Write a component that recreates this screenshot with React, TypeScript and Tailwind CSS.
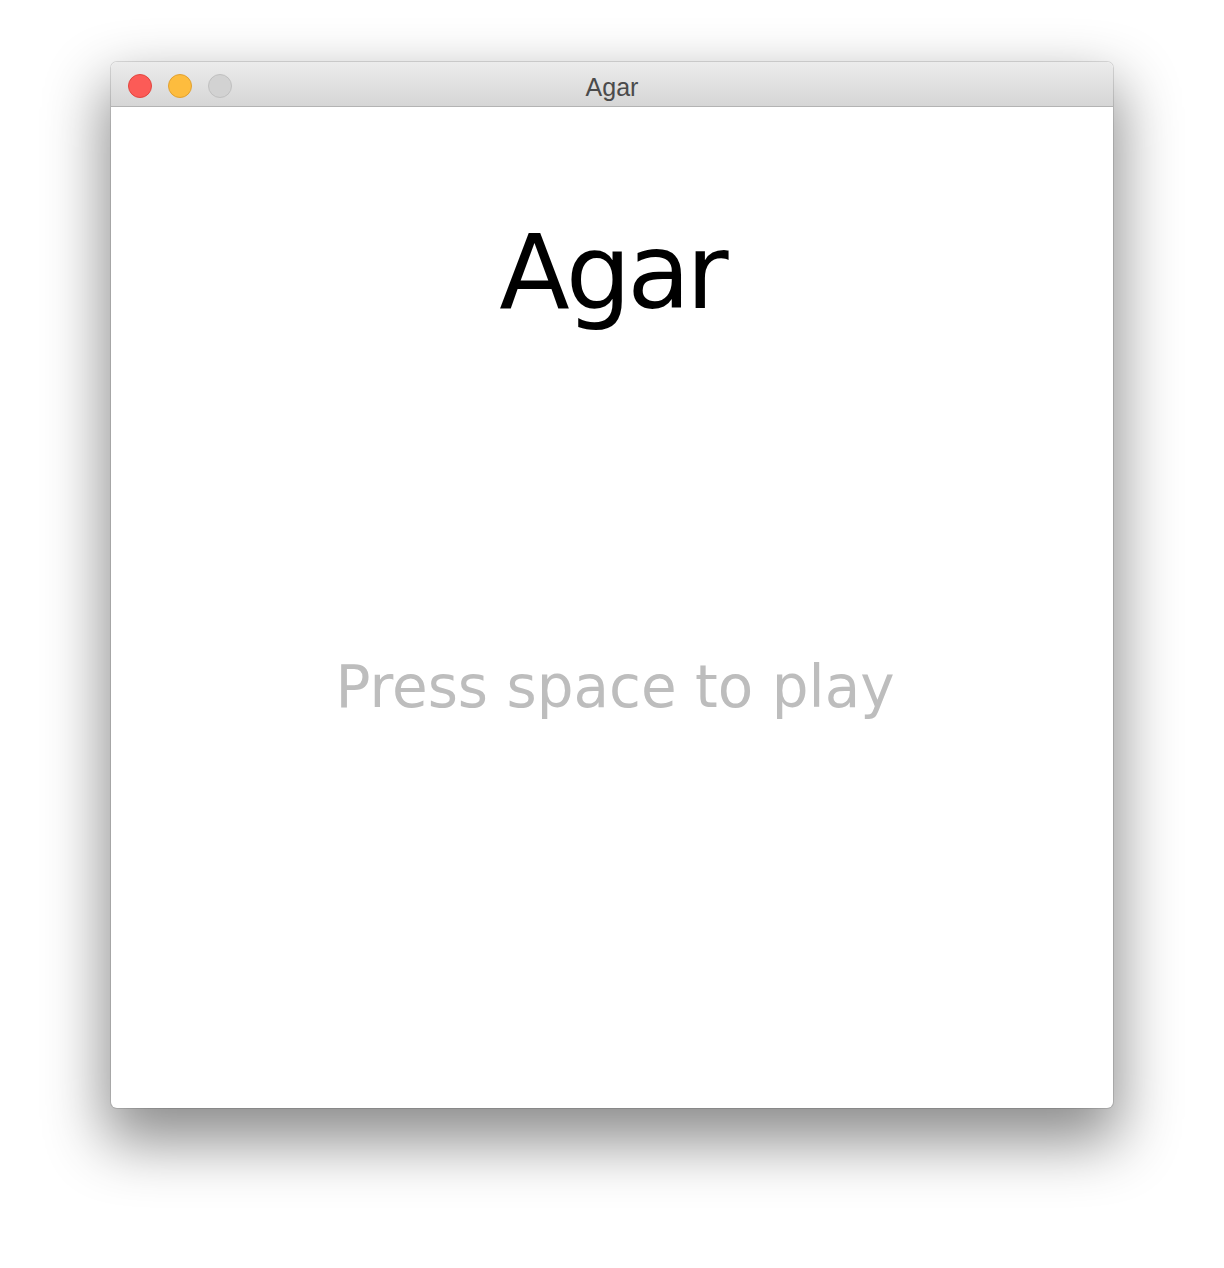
// App.tsx

import React from 'react'

const TrafficLights = () => {
  return (
    <div className="flex items-center gap-4 pl-[17px]">
      <span className="size-6 rounded-full bg-[#fc5b57] border border-[#e2463f]" />
      <span className="size-6 rounded-full bg-[#fdbc3e] border border-[#e1a130]" />
      <span className="size-6 rounded-full bg-[#d2d2d2] border border-[#c0c0c0]" />
    </div>
  )
}

const App = () => {
  return (
    <main className="min-h-[1268px] bg-white pt-[62px] font-['DejaVu_Sans',sans-serif]">
      <div className="mx-auto flex h-[1046px] w-[1002px] flex-col overflow-hidden rounded-[6px] bg-white shadow-[0_28px_60px_6px_rgba(0,0,0,0.45),0_0_0_1px_rgba(0,0,0,0.12)]">
        {/* title bar */}
        <div className="relative flex h-[45px] shrink-0 items-center border-b border-[#b3b3b3] bg-gradient-to-b from-[#ececec] to-[#d6d6d6] pt-[3px]">
          <TrafficLights />
          <span className="absolute inset-x-0 mt-[4px] text-center text-[25px] leading-none text-[#4b4b4b] font-['Liberation_Sans',sans-serif]">
            Agar
          </span>
        </div>

        {/* game canvas */}
        <div className="flex flex-1 flex-col items-center">
          <h1 className="mt-[114px] text-[103px] leading-none tracking-[-4px] text-black">Agar</h1>
          <p className="ml-[6px] mt-[334px] text-[58px] leading-none text-[#bdbdbd]">Press space to play</p>
        </div>
      </div>
    </main>
  )
}

export default App
